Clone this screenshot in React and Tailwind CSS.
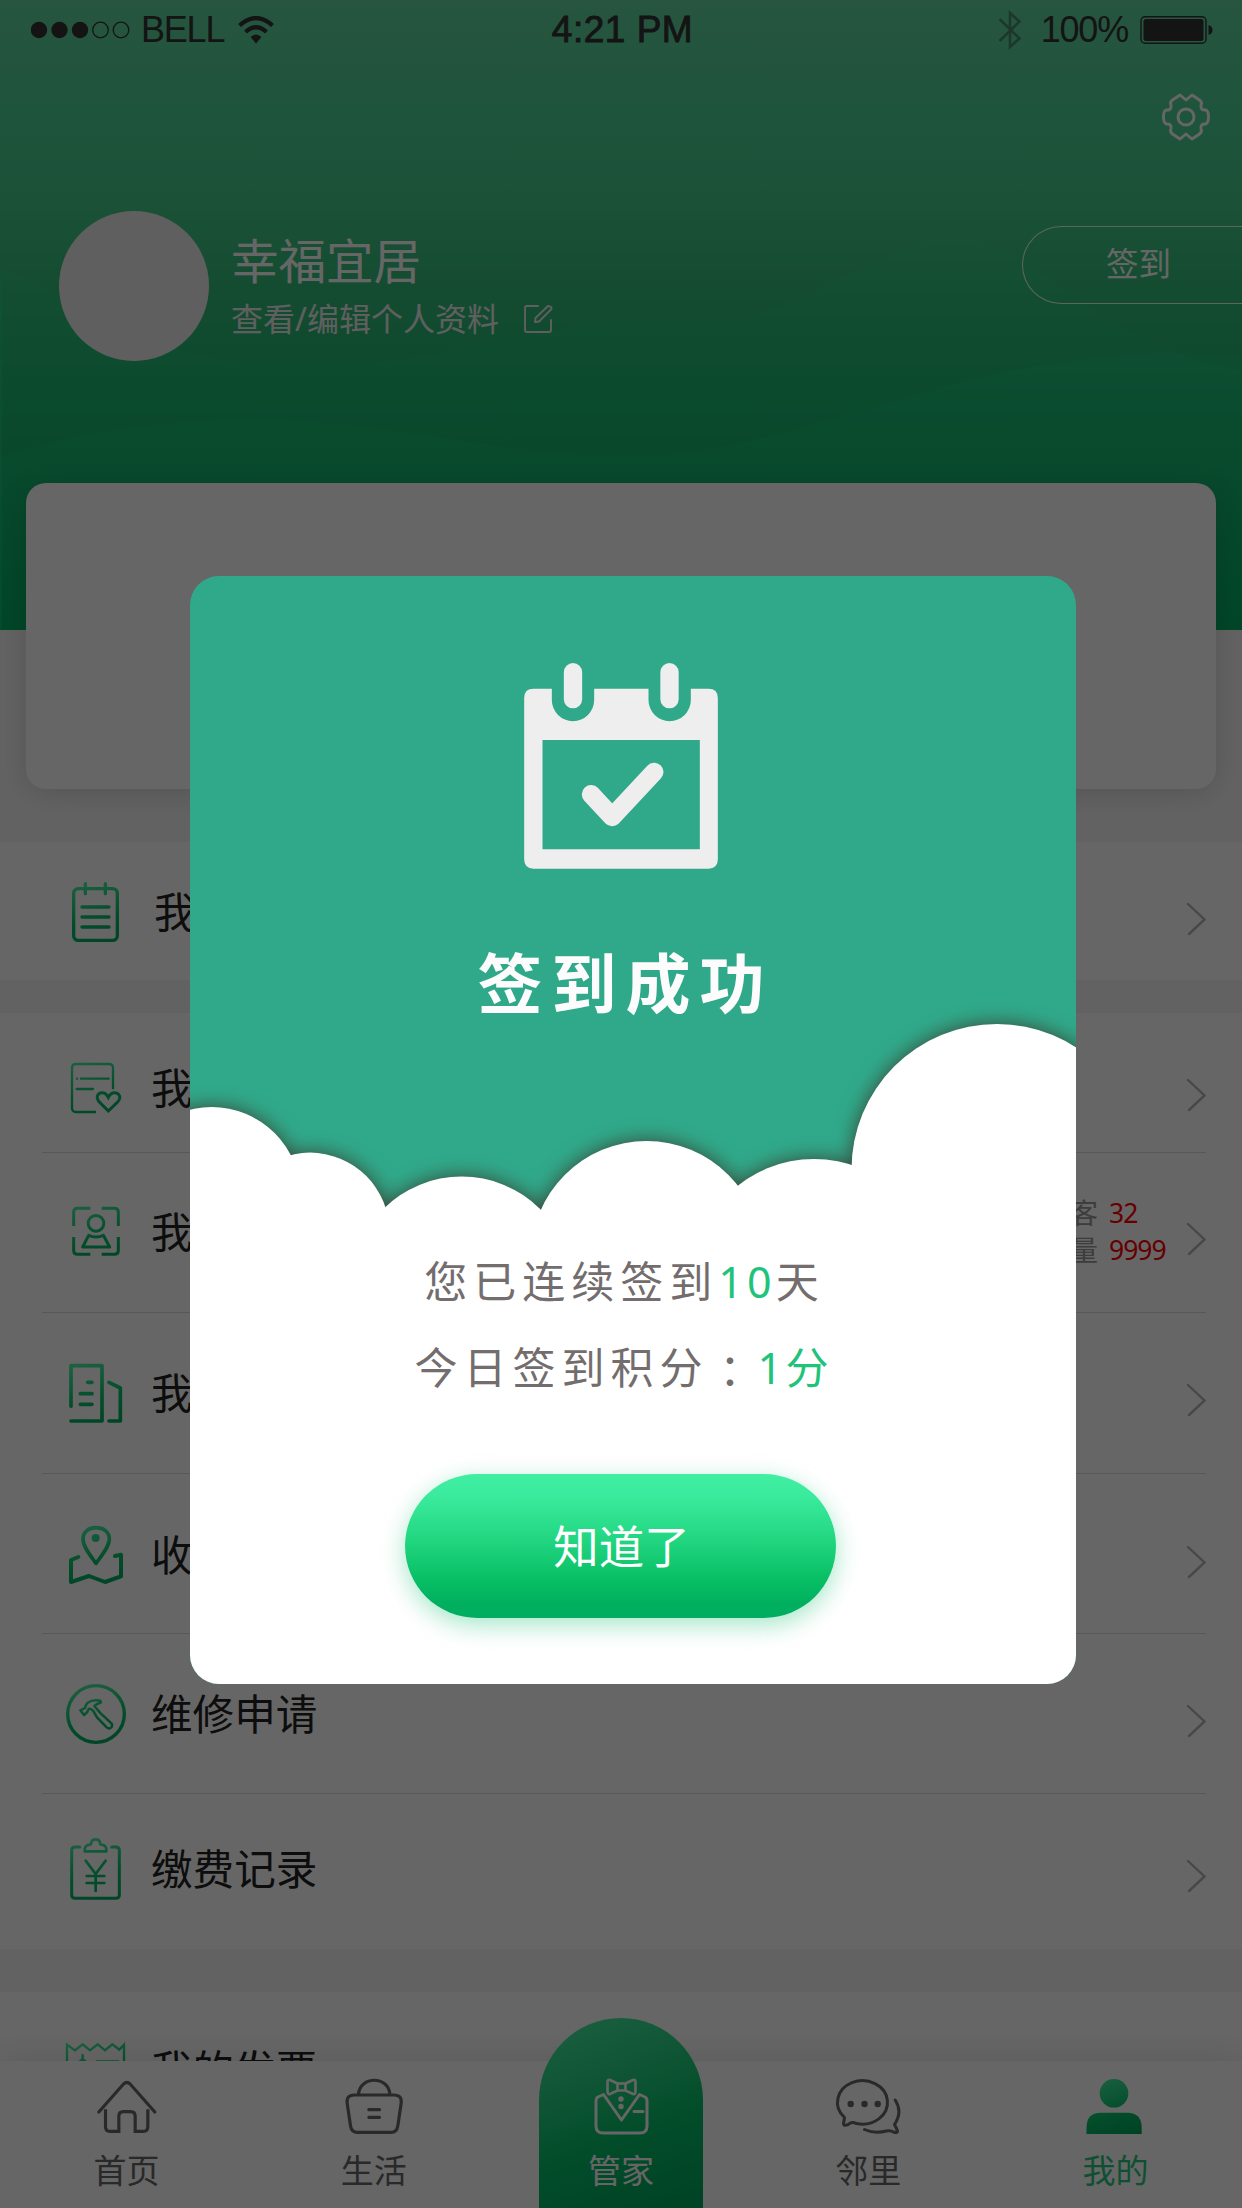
import React from "react";

function GradientIcon({ id, top, children }) {
  return (
    <svg
      className="ml-[18px] h-[80px] w-[70px] shrink-0"
      viewBox={`180 ${top} 210 240`}
      fill="none"
      stroke={`url(#${id})`}
      strokeLinecap="round"
      strokeLinejoin="round"
    >
      <defs>
        <linearGradient id={id} gradientUnits="userSpaceOnUse" x1="260" y1={top + 30} x2="310" y2={top + 210}>
          <stop offset="0" stopColor="#42f0a3" />
          <stop offset="0.6" stopColor="#08c06a" />
          <stop offset="1" stopColor="#00ac60" />
        </linearGradient>
      </defs>
      {children}
    </svg>
  );
}

const NotepadIcon = () => (
  <GradientIcon id="g-notepad" top={153}>
    <g strokeWidth="10">
      <rect x="221" y="203" width="131" height="155" rx="14" />
      <path d="M256 188V218M316 188V218M246 258H327M246 288H327M246 318H327" />
    </g>
  </GradientIcon>
);

const FavoriteIcon = () => (
  <GradientIcon id="g-favorite" top={684}>
    <path strokeWidth="7" strokeLinecap="butt" d="M339 808V744q0-12-12-12H228q-12 0-12 12V864q0 12 12 12H288" />
    <path strokeWidth="7" d="M231 776h.1M243 776H326M230 807H279" />
    <path
      strokeWidth="9"
      strokeLinejoin="miter"
      d="M325 873L300 848C284 832 294 818 306 818Q318 818 325 832Q332 818 344 818C356 818 368 832 351 848Z"
    />
  </GradientIcon>
);

const VisitorIcon = () => (
  <GradientIcon id="g-visitor" top={1116}>
    <g strokeWidth="9" strokeLinecap="butt">
      <path d="M271 1165H233q-12 0-12 12V1218M305 1165H343q12 0 12 12V1218M221 1251V1291q0 12 12 12H271M305 1303H343q12 0 12-12V1251" />
      <circle cx="288" cy="1210" r="23.5" />
      <path d="M266 1246L248 1281H329L310 1246Q288 1256 266 1246Z" />
    </g>
  </GradientIcon>
);

const BuildingIcon = () => (
  <GradientIcon id="g-building" top={159}>
    <path strokeWidth="11" d="M213 319V197H306V363H213M263 247H276M241 281H276M241 313H276M327 247L361 264V363H327" />
  </GradientIcon>
);

const AddressIcon = () => (
  <GradientIcon id="g-address" top={645}>
    <path strokeWidth="11" d="M288 790C270 765 249 740 249 717C249 695 266 683 288 683C310 683 328 695 328 717C328 740 306 765 288 790Z" />
    <circle cx="287" cy="714" r="12" fill="url(#g-address)" stroke="none" />
    <path strokeWidth="12" d="M235 771L213 780V846L267 828L315 846L363 829V764L345 768" />
  </GradientIcon>
);

const RepairIcon = () => (
  <GradientIcon id="g-repair" top={1122}>
    <circle strokeWidth="10" cx="288" cy="1242" r="85" />
    <path
      strokeWidth="7.5"
      d="M241 1231L252 1245L261 1237L266 1227Q273 1225 280 1233L291 1252L320 1282Q328 1289 335 1281Q339 1274 332 1268L302 1240L283 1218Q289 1212 302 1208Q304 1204 301 1202Q279 1197 263 1208Q257 1213 255 1224Z"
    />
  </GradientIcon>
);

const PaymentIcon = () => (
  <GradientIcon id="g-payment" top={327}>
    <path strokeWidth="9" d="M239 381H225q-10 0-10 10V525q0 10 10 10H348q10 0 10-10V391q0-10-10-10H335" />
    <path strokeWidth="8" d="M254 394H319Q321 375 304 374Q300 373 300 368Q299 358 287 358Q275 358 274 368Q274 373 270 374Q252 375 254 394Z" />
    <path strokeWidth="8" d="M257 422L287 462L317 422M287 462V513M260 468H313M260 489H313" />
  </GradientIcon>
);

const InvoiceIcon = () => (
  <GradientIcon id="g-invoice" top={930}>
    <path strokeWidth="7" strokeLinejoin="miter" d="M201 1100V974L225 991L248 973L270 991L293 973L315 991L337 973L358 989L372 974V1100" />
    <path strokeWidth="7" d="M248 1005V1018M236 1028Q248 1010 260 1028M290 1024H355" />
  </GradientIcon>
);

const Chevron = () => (
  <svg className="mt-[14px] h-[34px] w-[20px] shrink-0" viewBox="0 0 20 34" fill="none" stroke="#b4b4b4" strokeWidth="2.4" strokeLinecap="round">
    <path d="M2 2L18.500 17.500L3 32" />
  </svg>
);

function Row({ icon, label, className, labelClass = "ml-[21px]", extra, line = true }) {
  return (
    <div className={`mr-[36px] ml-[42px] flex items-start ${line ? "border-b border-[#dcdcdc]" : ""} ${className}`}>
      <div className="flex h-[80px] flex-1 items-center">
        {icon}
        <span className={`text-[41.6px] leading-[80px] whitespace-nowrap text-[#222] ${labelClass}`}>{label}</span>
        <div className="ml-auto flex items-center">
          {extra}
          <Chevron />
        </div>
      </div>
    </div>
  );
}

function StatusBar() {
  return (
    <div className="grid h-[60px] grid-cols-3 items-center font-['Liberation_Sans',sans-serif] text-[36px] text-[#333]">
      <div className="flex items-center pl-[31px]">
        <svg className="h-[18px] w-[100px]" viewBox="0 0 100 18">
          <g fill="#333">
            <circle cx="8" cy="9" r="8.200" />
            <circle cx="28.500" cy="9" r="8.200" />
            <circle cx="49" cy="9" r="8.200" />
          </g>
          <g fill="none" stroke="#333" strokeWidth="1.300">
            <circle cx="69.500" cy="9" r="7.800" />
            <circle cx="90" cy="9" r="7.800" />
          </g>
        </svg>
        <span className="ml-[10px] tracking-[-1.2px]">BELL</span>
        <svg className="ml-[14px] h-[28px] w-[36px]" viewBox="0 0 36 28" fill="none" stroke="#333" strokeWidth="4.200">
          <path d="M1.500 9.500Q18-5.500 34.500 9.500" />
          <path d="M7.500 16Q18 6.500 28.500 16" />
          <path d="M18 27.500L12.500 21Q18 16 23.500 21Z" fill="#333" stroke="none" />
        </svg>
      </div>
      <div className="pl-[3px] text-center text-[37px] tracking-[0.5px] whitespace-nowrap [-webkit-text-stroke:0.9px_#333]">4:21 PM</div>
      <div className="flex items-center justify-end pr-[29px]">
        <svg className="mr-[19px] h-[40px] w-[24px]" viewBox="0 0 24 40" fill="none" stroke="#333" strokeOpacity="0.45" strokeWidth="2.600">
          <path d="M1.500 9L21.500 28.500L12 37V3L21.500 11.500L1.500 31" />
        </svg>
        <span className="tracking-[-1.2px]">100%</span>
        <svg className="ml-[12px] h-[30px] w-[73px]" viewBox="0 0 73 30">
          <rect x="1" y="1.700" width="65" height="26.500" rx="4" fill="none" stroke="#333" strokeWidth="1.400" />
          <rect x="3.500" y="4" width="60" height="22" rx="2.500" fill="#333" />
          <path d="M68.500 10Q72.500 11 72.500 15T68.500 20Z" fill="#333" />
        </svg>
      </div>
    </div>
  );
}

function Header() {
  return (
    <header className="relative h-[630px] overflow-hidden bg-[linear-gradient(180deg,#62d49f_0%,#4fd397_17%,#43cb8a_32%,#31bc79_48%,#1eb770_62%,#16af68_73%,#05a55d_90%,#00a25a_100%)]">
      <svg className="absolute inset-0 h-full w-full" viewBox="0 0 1242 630" fill="#1de59a">
        <path fillOpacity="0.08" d="M0 270C60 280 140 366 290 366C480 366 560 310 690 318C800 330 880 236 953 236C1030 236 1100 350 1242 370V630H0Z" />
        <path fillOpacity="0.12" d="M0 457C120 420 210 420 265 420C400 422 500 457 640 457C800 452 960 353 1175 353Q1210 353 1242 358V630H0Z" />
        <rect y="275" width="2" height="355" fillOpacity="0.25" />
      </svg>
      <div className="relative flex h-full flex-col">
        <StatusBar />
        <div className="flex justify-end pt-[32px] pr-[31px]">
          <svg className="h-[50px] w-[50px]" viewBox="0 0 50 50" fill="none" stroke="#fff" strokeWidth="2.900" strokeLinejoin="round">
            <path d="M19 3L25 8L31 3L38.500 8Q41.500 10 40 13.500Q39.500 18.500 44.500 18Q47.500 18.500 47.500 25Q47.500 31 44.500 32Q39.500 31.500 40 36.500Q41.500 40 38.500 42L31 47L25 42L19 47L11.500 42Q8.500 40 10 36.500Q10.500 31.500 5.500 32Q2.500 31 2.500 25Q2.500 18.500 5.500 18Q10.500 18.500 10 13.500Q8.500 10 11.500 8Z" />
            <circle cx="25" cy="25" r="8" />
          </svg>
        </div>
        <div className="mt-[69px] flex items-start">
          <div className="ml-[59px] h-[150px] w-[150px] rounded-full bg-[#eee]" />
          <div className="ml-[22px] pt-[20px]">
            <div className="text-[47.5px] leading-[60px] text-white">幸福宜居</div>
            <div className="mt-[1px] flex items-center text-[32px] leading-[54px] text-[#eee]">
              <span>查看/编辑个人资料</span>
              <svg className="ml-[24px] h-[30px] w-[30px]" viewBox="0 0 30 30" fill="none" stroke="#eee" strokeWidth="1.900" strokeLinejoin="round" strokeLinecap="round">
                <path d="M15 2H4Q2 2 2 4V26Q2 28 4 28H26Q28 28 28 26V16" />
                <path d="M12 18L12.500 14L25 2Q29 2.500 28.500 5L16 17.500Z" />
              </svg>
            </div>
          </div>
          <div className="mt-[15px] ml-auto flex h-[78px] w-[220px] items-center rounded-l-full border border-r-0 border-white/90 pb-[2px] pl-[83px] text-[32.5px] text-white">
            签到
          </div>
        </div>
      </div>
    </header>
  );
}

function Tab({ icon, label, className = "text-[#666]" }) {
  return (
    <div className={`flex flex-1 flex-col items-center ${className}`}>
      {icon}
      <span className="text-[33px] leading-[61px]">{label}</span>
    </div>
  );
}

const tabSvg = "mt-[9px] h-[70px] w-[70px]";

function TabBar() {
  return (
    <nav className="absolute inset-x-0 bottom-0 flex h-[147px] bg-white px-[3px] shadow-[0_-6px_30px_rgba(0,0,0,0.09)]">
      <Tab
        label="首页"
        icon={
          <svg className={tabSvg} viewBox="274.500 1050 210 210" fill="none" stroke="currentColor" strokeWidth="9.500" strokeLinecap="round">
            <path d="M295 1176L369 1092q10-9 20 0L463 1176" />
            <path strokeLinecap="butt" d="M315 1168V1220q0 14 14 14H355V1189q0-14 14-14H390q14 0 14 14V1234H428q14 0 14-14V1168" />
          </svg>
        }
      />
      <Tab
        label="生活"
        icon={
          <svg className={tabSvg} viewBox="1016.500 1050 210 210" fill="none" stroke="currentColor" strokeWidth="9.500" strokeLinecap="round">
            <path d="M1062 1125H1182Q1206 1125 1203 1150L1193 1217Q1190 1237 1173 1237H1072Q1054 1237 1051 1217L1041 1150Q1038 1125 1062 1125Z" />
            <path d="M1075 1122C1080 1067 1165 1067 1169 1122M1106 1169H1138M1106 1192H1138" />
          </svg>
        }
      />
      <div className="-mt-[43px] flex flex-1 justify-center">
        <div className="flex h-[190px] w-[164px] flex-col items-center rounded-t-full bg-[linear-gradient(160deg,#43f0a5_0%,#2bd888_30%,#06bf68_60%,#00a65e_100%)] pt-[43px] text-white">
          <svg className={tabSvg} viewBox="586 2070 70 70" fill="none" stroke="currentColor" strokeWidth="3" strokeLinejoin="round" strokeLinecap="round">
            <path d="M603.500 2094.500L598 2097Q596 2098 596 2101V2126Q596 2133 603 2133H640Q647 2133 647 2126V2101Q647 2098 645 2097L639.500 2094.500L621.500 2120ZM634 2111.500H643" />
            <path strokeWidth="2.600" d="M617.500 2083.500L610 2080Q607.500 2079 607.500 2082V2091Q607.500 2095 610 2094L617.500 2090.500M625.500 2083.500L633 2080Q635.500 2079 635.500 2082V2091Q635.500 2095 633 2094L625.500 2090.500M617.500 2083.500H625.500V2090.500H617.500Z" />
            <circle cx="621" cy="2099" r="2.700" fill="currentColor" stroke="none" />
            <circle cx="621" cy="2106.500" r="2.700" fill="currentColor" stroke="none" />
          </svg>
          <span className="text-[33px] leading-[61px]">管家</span>
        </div>
      </div>
      <Tab
        label="邻里"
        icon={
          <svg className={tabSvg} viewBox="832.500 2070 70 70" fill="none" stroke="currentColor" strokeWidth="3" strokeLinecap="round" strokeLinejoin="round">
            <path d="M844 2117.500A25 21.700 0 1 1 856 2123.500Q852 2122 850 2123Q846 2126 843.500 2125Q842.500 2124 843.500 2121Z" />
            <path d="M894.700 2100Q902.500 2112 894 2124.500Q896 2128 897 2131Q897 2133.500 893 2132Q890 2130 886 2131Q874 2134 864 2129.500" />
            <g fill="currentColor" stroke="none">
              <circle cx="850.200" cy="2104" r="3.200" />
              <circle cx="864" cy="2104" r="3.200" />
              <circle cx="877.200" cy="2104" r="3.200" />
            </g>
          </svg>
        }
      />
      <Tab
        label="我的"
        className="text-[#26c980]"
        icon={
          <svg className={tabSvg} viewBox="1080.500 2070 70 70">
            <defs>
              <linearGradient id="g-me" gradientUnits="userSpaceOnUse" x1="1100" y1="2078" x2="1122" y2="2138">
                <stop offset="0" stopColor="#42f0a3" />
                <stop offset="0.6" stopColor="#08c06a" />
                <stop offset="1" stopColor="#00a65e" />
              </linearGradient>
            </defs>
            <g fill="url(#g-me)">
              <circle cx="1114.500" cy="2093.300" r="14.300" />
              <path d="M1087 2134V2128Q1087 2112.700 1101 2112.700H1128Q1142.200 2112.700 1142.200 2128V2134Z" />
            </g>
          </svg>
        }
      />
    </nav>
  );
}

function CalendarCheck() {
  return (
    <svg className="h-[206px] w-[194px]" viewBox="222 129 581 618" fill="#eee">
      <path
        fillRule="evenodd"
        d="M250 206H305V240A63.500 63.500 0 0 0 432 240V206H595V240A63.500 63.500 0 0 0 722 240V206H775Q803 206 803 234V718Q803 746 775 746H250Q222 746 222 718V234Q222 206 250 206ZM277 360V688H749V360Z"
      />
      <rect x="341" y="129" width="55" height="136" rx="27.500" />
      <rect x="630.500" y="129" width="55" height="136" rx="27.500" />
      <path d="M423 523L486 591L612 456" fill="none" stroke="#eee" strokeWidth="56" strokeLinecap="round" strokeLinejoin="round" />
    </svg>
  );
}

function CheckInDialog() {
  return (
    <section className="relative h-[1108px] w-[886px] overflow-hidden rounded-[29px] bg-[#30a98a]">
      <svg className="absolute inset-0 h-full w-full" viewBox="190 576 886 1108">
        <g fill="#fff" className="drop-shadow-[0_0_10px_rgba(60,35,25,0.75)]">
          <circle cx="211.700" cy="1196" r="89" />
          <circle cx="310" cy="1232" r="79.400" />
          <circle cx="461.700" cy="1287" r="110.500" />
          <circle cx="646.600" cy="1256.800" r="115.800" />
          <circle cx="814" cy="1281" r="122" />
          <circle cx="997" cy="1169.500" r="145.500" />
          <rect x="130" y="1215" width="1007" height="530" />
        </g>
      </svg>
      <div className="relative flex w-[862px] flex-col items-center pt-[87px]">
        <CalendarCheck />
        <h2 className="mt-[64px] pl-[9px] text-[65px] leading-[100px] font-bold tracking-[9px] text-[#fcfcfc]">签到成功</h2>
        <p className="mt-[206px] pl-[7px] text-[43px] leading-[86px] tracking-[6px] text-[#736d6d]">
          您已连续签到<span className="tracking-[4.2px] text-[#1fc37b]">10</span>天
        </p>
        <p className="pl-[7px] text-[43px] leading-[86px] tracking-[6px] text-[#736d6d]">
          今日签到积分<span className="inline-block translate-y-[4px] font-['Noto_Sans_CJK_TC',sans-serif] leading-none">：</span>
          <span className="text-[#1fc37b]">
            <span className="tracking-[3.5px]">1</span>分
          </span>
        </p>
        <button className="mt-[63px] mr-[1px] h-[144px] w-[431px] rounded-full bg-[linear-gradient(180deg,#40efa2_0%,#3beb9d_15%,#25d984_42%,#09c066_72%,#00af5e_90%,#00ad60_100%)] pl-[2px] text-[45.5px] leading-[143px] text-white shadow-[0_7px_24px_rgba(0,185,105,0.36)]">
          知道了
        </button>
      </div>
    </section>
  );
}

export default function App() {
  return (
    <div className="relative h-[2208px] w-[1242px] overflow-hidden bg-[#f6f6f6] font-['Noto_Sans','Noto_Sans_CJK_SC',sans-serif]">
      <Header />
      <div className="relative mx-[26px] -mt-[147px] h-[306px] rounded-[20px] bg-white shadow-[0_4px_30px_rgba(0,0,0,0.14)]" />
      <div className="mt-[53px] bg-white">
        <Row className="h-[138px] pt-[30px]" icon={<NotepadIcon />} label="我" labelClass="ml-[24px]" line={false} />
      </div>
      <div className="mt-[33px] bg-white">
        <Row className="h-[140px] pt-[35px]" icon={<FavoriteIcon />} label="我" />
        <Row
          className="h-[160px] pt-[39px]"
          icon={<VisitorIcon />}
          label="我"
          extra={
            <div className="grid w-[116px] grid-cols-[39px_auto] text-[28px] leading-[37.5px]">
              <span className="text-[#999]">客</span>
              <span className="text-[26.5px] tracking-[-1px] text-[#f00]">32</span>
              <span className="text-[#999]">量</span>
              <span className="text-[26.5px] tracking-[-1px] text-[#f00]">9999</span>
            </div>
          }
        />
        <Row className="h-[161px] pt-[40px]" icon={<BuildingIcon />} label="我" />
        <Row className="h-[160px] pt-[41px]" icon={<AddressIcon />} label="收" />
        <Row className="h-[160px] pt-[40px]" icon={<RepairIcon />} label="维修申请" />
        <Row className="h-[155px] pt-[35px]" icon={<PaymentIcon />} label="缴费记录" line={false} />
      </div>
      <div className="mt-[43px] bg-white">
        <Row className="h-[216px] pt-[38px]" icon={<InvoiceIcon />} label="我的发票" line={false} />
      </div>
      <TabBar />
      <div className="absolute inset-0 bg-black/60 pt-[576px] pl-[190px]">
        <CheckInDialog />
      </div>
    </div>
  );
}
